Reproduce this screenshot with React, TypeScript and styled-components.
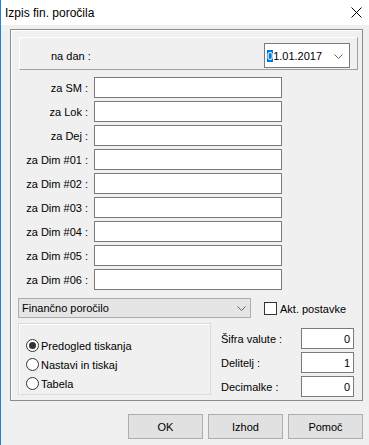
import React from "react";
import styled, { createGlobalStyle } from "styled-components";

const Global = createGlobalStyle`
  html, body { margin: 0; padding: 0; background: #f0f0f0; }
  body { font-family: "Liberation Sans", Arial, sans-serif; font-size: 11px; color: #000; }
`;

const Window = styled.div`
  width: 369px;
  height: 445px;
  box-sizing: border-box;
  border-left: 1px solid #1883d7;
  background: #f0f0f0;
  display: flex;
  flex-direction: column;
  overflow: hidden;
`;

const TitleBar = styled.div`
  height: 25px;
  background: #fff;
  display: flex;
  align-items: center;
  justify-content: space-between;
  padding: 0 7px 0 4px;
  font-size: 12px;
  flex-shrink: 0;
`;

const Group = styled.div`
  margin: 4px 0 0 9px;
  width: 353px;
  height: 372px;
  box-sizing: border-box;
  border: 1px solid #8c8c8c;
  box-shadow: inset 1px 1px 0 #ffffff;
  padding: 7px 0 0 8px;
  display: flex;
  flex-direction: column;
`;

const RaisedPanel = styled.div`
  width: 339px;
  height: 33px;
  box-sizing: border-box;
  border-top: 1px solid #fff;
  border-left: 1px solid #fff;
  border-right: 1px solid #a0a0a0;
  border-bottom: 1px solid #a0a0a0;
  display: flex;
  align-items: center;
  justify-content: space-between;
  padding: 4px 7px 0 31px;
`;

const DateCombo = styled.div`
  width: 86px;
  height: 25px;
  box-sizing: border-box;
  border: 1px solid #7a7a7a;
  background: #fff;
  display: flex;
  align-items: center;
  justify-content: space-between;
  padding: 1px 6px 0 2px;
`;

const Sel = styled.span`
  background: #0078d7;
  color: #fff;
`;

const FieldGrid = styled.div`
  display: grid;
  grid-template-columns: 69px 188px;
  grid-auto-rows: 21px;
  column-gap: 6px;
  row-gap: 3px;
  margin: 7px 0 0 0;
`;

const Label = styled.div`
  display: flex;
  align-items: center;
  justify-content: flex-end;
  white-space: nowrap;
`;

const TextBox = styled.div<{ $align?: string }>`
  box-sizing: border-box;
  border: 1px solid #7a7a7a;
  background: #fff;
  display: flex;
  align-items: center;
  justify-content: ${(p) => p.$align || "flex-start"};
  padding: 1px 3px 0;
`;

const ComboRow = styled.div`
  display: flex;
  align-items: center;
  margin: 8px 0 0 -1px;
`;

const ReportCombo = styled.div`
  width: 233px;
  height: 20px;
  box-sizing: border-box;
  border: 1px solid #adadad;
  background: #e5e5e5;
  display: flex;
  align-items: center;
  justify-content: space-between;
  padding: 0 4px 0 3px;
`;

const CheckLabel = styled.label`
  display: flex;
  align-items: center;
  margin-left: 13px;
  gap: 3px;
  padding-top: 1px;
`;

const CheckBox = styled.span`
  width: 13px;
  height: 13px;
  box-sizing: border-box;
  border: 1px solid #333;
  background: #fff;
`;

const Lower = styled.div`
  display: flex;
  margin: 5px 0 0 -1px;
`;

const RadioBox = styled.div`
  width: 193px;
  height: 72px;
  box-sizing: border-box;
  border: 1px solid #dcdcdc;
  box-shadow: inset 1px 1px 0 #fff;
  padding: 12px 0 0 7px;
  display: flex;
  flex-direction: column;
`;

const RadioRow = styled.div`
  height: 19px;
  display: flex;
  align-items: center;
  gap: 2px;
`;

const RadioCircle = styled.span<{ $on?: boolean }>`
  width: 13px;
  height: 13px;
  box-sizing: border-box;
  border-radius: 50%;
  border: 1px solid #333;
  background: #fff;
  display: flex;
  align-items: center;
  justify-content: center;
  &::after {
    content: "";
    width: 7px;
    height: 7px;
    border-radius: 50%;
    background: ${(p) => (p.$on ? "#333" : "transparent")};
  }
`;

const RightFields = styled.div`
  display: grid;
  grid-template-columns: 80px 53px;
  grid-auto-rows: 21px;
  row-gap: 3px;
  margin: 5px 0 0 10px;
`;

const RightLabel = styled.div`
  display: flex;
  align-items: center;
  white-space: nowrap;
`;

const Buttons = styled.div`
  display: flex;
  gap: 5px;
  justify-content: flex-end;
  margin: 13px 6px 0 0;
`;

const Button = styled.button`
  width: 75px;
  height: 25px;
  box-sizing: border-box;
  border: 1px solid #adadad;
  background: #e1e1e1;
  font-family: "Liberation Sans", Arial, sans-serif;
  font-size: 11px;
  color: #000;
  padding: 0;
`;

const Chevron = () => (
  <svg width="9" height="5" viewBox="0 0 9 5">
    <path d="M0.5 0.5 L4.5 4.5 L8.5 0.5" fill="none" stroke="#606060" strokeWidth="1" />
  </svg>
);

const CloseIcon = () => (
  <svg width="11" height="11" viewBox="0 0 11 11">
    <path d="M0.5 0.5 L10.5 10.5 M10.5 0.5 L0.5 10.5" stroke="#000" strokeWidth="1" />
  </svg>
);

const fields = ["za SM :", "za Lok :", "za Dej :", "za Dim #01 :", "za Dim #02 :", "za Dim #03 :", "za Dim #04 :", "za Dim #05 :", "za Dim #06 :"];

export default function App() {
  return (
    <>
      <Global />
      <Window>
        <TitleBar>
          <span>Izpis fin. poročila</span>
          <CloseIcon />
        </TitleBar>
        <Group>
          <RaisedPanel>
            <span>na dan :</span>
            <DateCombo>
              <span>
                <Sel>0</Sel>1.01.2017
              </span>
              <Chevron />
            </DateCombo>
          </RaisedPanel>
          <FieldGrid>
            {fields.map((f) => (
              <React.Fragment key={f}>
                <Label>{f}</Label>
                <TextBox />
              </React.Fragment>
            ))}
          </FieldGrid>
          <ComboRow>
            <ReportCombo>
              <span>Finančno poročilo</span>
              <Chevron />
            </ReportCombo>
            <CheckLabel>
              <CheckBox />
              <span>Akt. postavke</span>
            </CheckLabel>
          </ComboRow>
          <Lower>
            <RadioBox>
              <RadioRow>
                <RadioCircle $on />
                <span>Predogled tiskanja</span>
              </RadioRow>
              <RadioRow>
                <RadioCircle />
                <span>Nastavi in tiskaj</span>
              </RadioRow>
              <RadioRow>
                <RadioCircle />
                <span>Tabela</span>
              </RadioRow>
            </RadioBox>
            <RightFields>
              <RightLabel>Šifra valute :</RightLabel>
              <TextBox $align="flex-end">0</TextBox>
              <RightLabel>Delitelj :</RightLabel>
              <TextBox $align="flex-end">1</TextBox>
              <RightLabel>Decimalke :</RightLabel>
              <TextBox $align="flex-end">0</TextBox>
            </RightFields>
          </Lower>
        </Group>
        <Buttons>
          <Button>OK</Button>
          <Button>Izhod</Button>
          <Button>Pomoč</Button>
        </Buttons>
      </Window>
    </>
  );
}
